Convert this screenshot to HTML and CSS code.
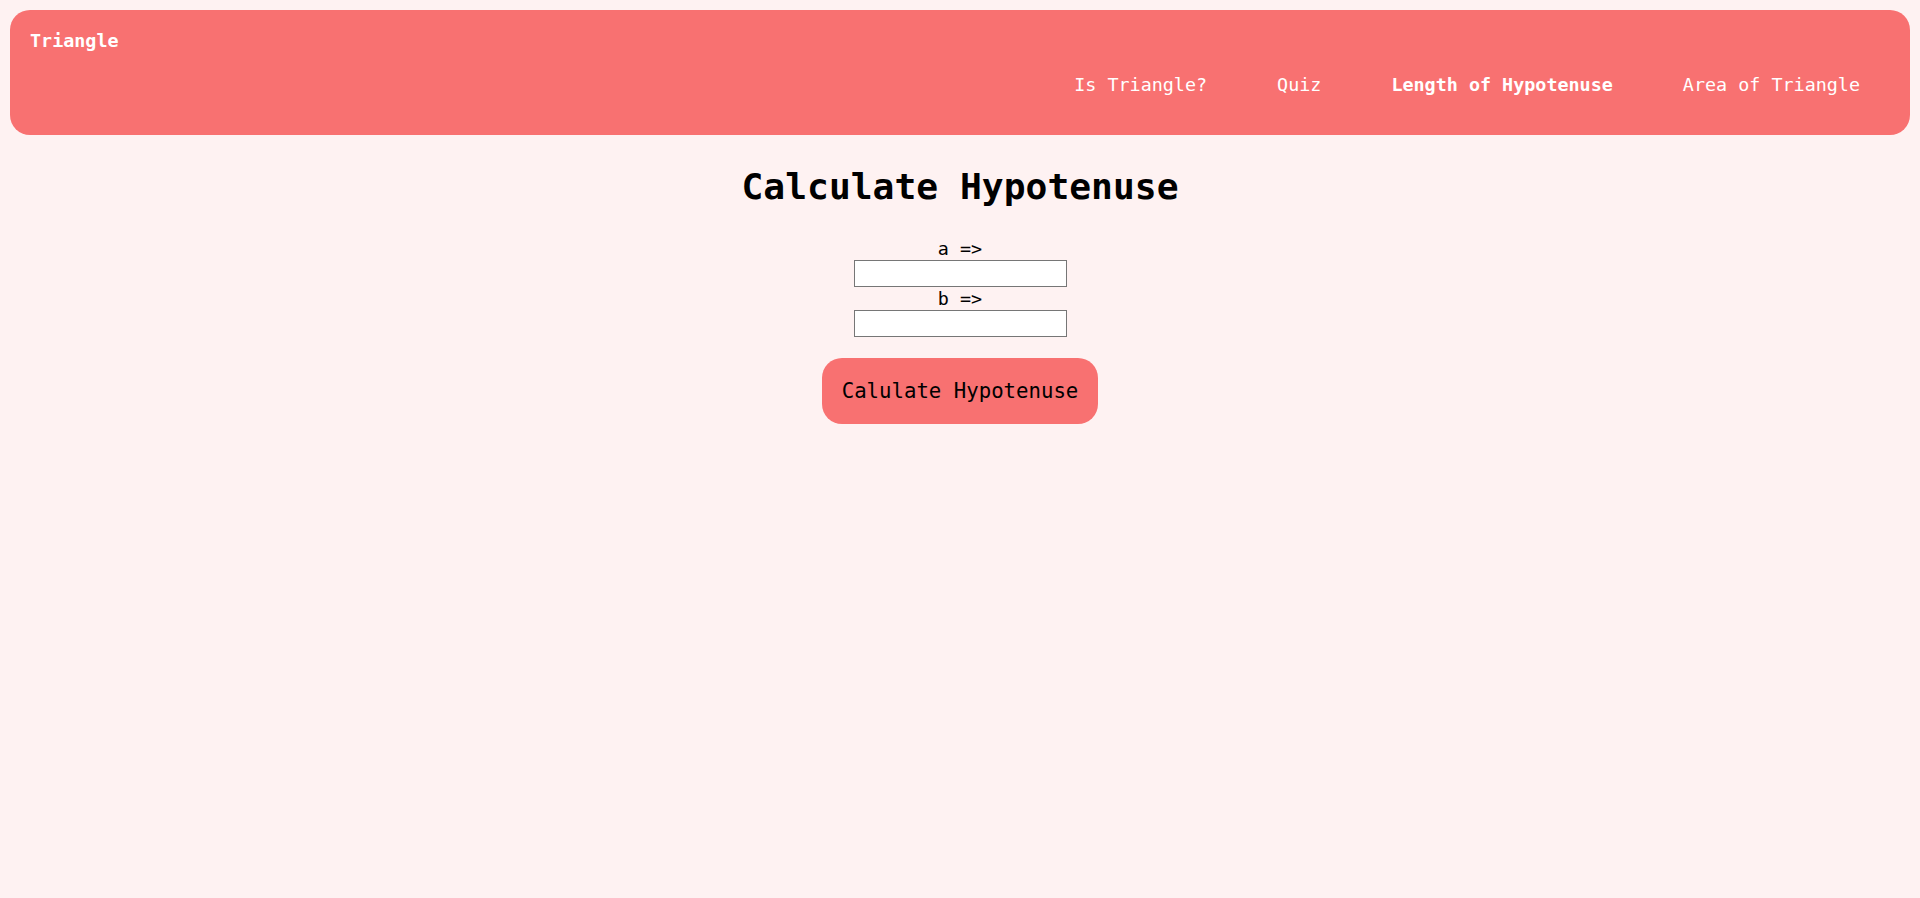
FILE: index.html
```
<!DOCTYPE html>
<html lang="en">
<head>
<meta charset="utf-8">
<title>Calculate Hypotenuse</title>
<link rel="stylesheet" href="styles.css">
</head>
<body>
<header class="header">
  <div class="brand">Triangle</div>
  <nav class="nav">
    <a class="nav-link" href="#">Is Triangle?</a>
    <a class="nav-link" href="#">Quiz</a>
    <a class="nav-link active" href="#">Length of Hypotenuse</a>
    <a class="nav-link" href="#">Area of Triangle</a>
  </nav>
</header>
<main class="main">
  <h1 class="title">Calculate Hypotenuse</h1>
  <form class="form">
    <label class="label" for="a">a =&gt;</label>
    <input class="input" id="a" type="text">
    <label class="label" for="b">b =&gt;</label>
    <input class="input" id="b" type="text">
    <button class="btn" type="button">Calulate Hypotenuse</button>
  </form>
</main>
</body>
</html>
```
FILE: styles.css
```
html, body {
  margin: 0;
  padding: 0;
}
body {
  background: #fef2f2;
  font-family: "DejaVu Sans Mono", "Liberation Mono", monospace;
  font-size: 18.4px;
  line-height: 23px;
  color: #000;
  padding: 10px;
}
.header {
  background: #f87171;
  border-radius: 20px;
  padding: 18.8px 50px 39.2px 20px;
  color: #fff;
}
.brand {
  font-weight: bold;
}
.nav {
  display: flex;
  justify-content: flex-end;
  gap: 70px;
  margin-top: 21px;
}
.nav-link {
  color: #fff;
  text-decoration: none;
}
.nav-link.active {
  font-weight: bold;
}
.main {
  display: flex;
  flex-direction: column;
  align-items: center;
}
.title {
  font-size: 36.3px;
  font-weight: bold;
  margin: 31.3px 0 0 0;
  line-height: 42.3px;
}
.form {
  display: flex;
  flex-direction: column;
  align-items: center;
  margin-top: 28.5px;
}
.input {
  width: 213px;
  height: 27px;
  box-sizing: border-box;
  border: 1px solid #767676;
  background: #fff;
  margin: 0;
  padding: 0 2px;
}
.btn {
  margin-top: 21px;
  background: #f87171;
  border: none;
  border-radius: 20px;
  font-family: inherit;
  font-size: 20.7px;
  line-height: 24.1px;
  color: #000;
  padding: 21px 19.2px;
}
```
